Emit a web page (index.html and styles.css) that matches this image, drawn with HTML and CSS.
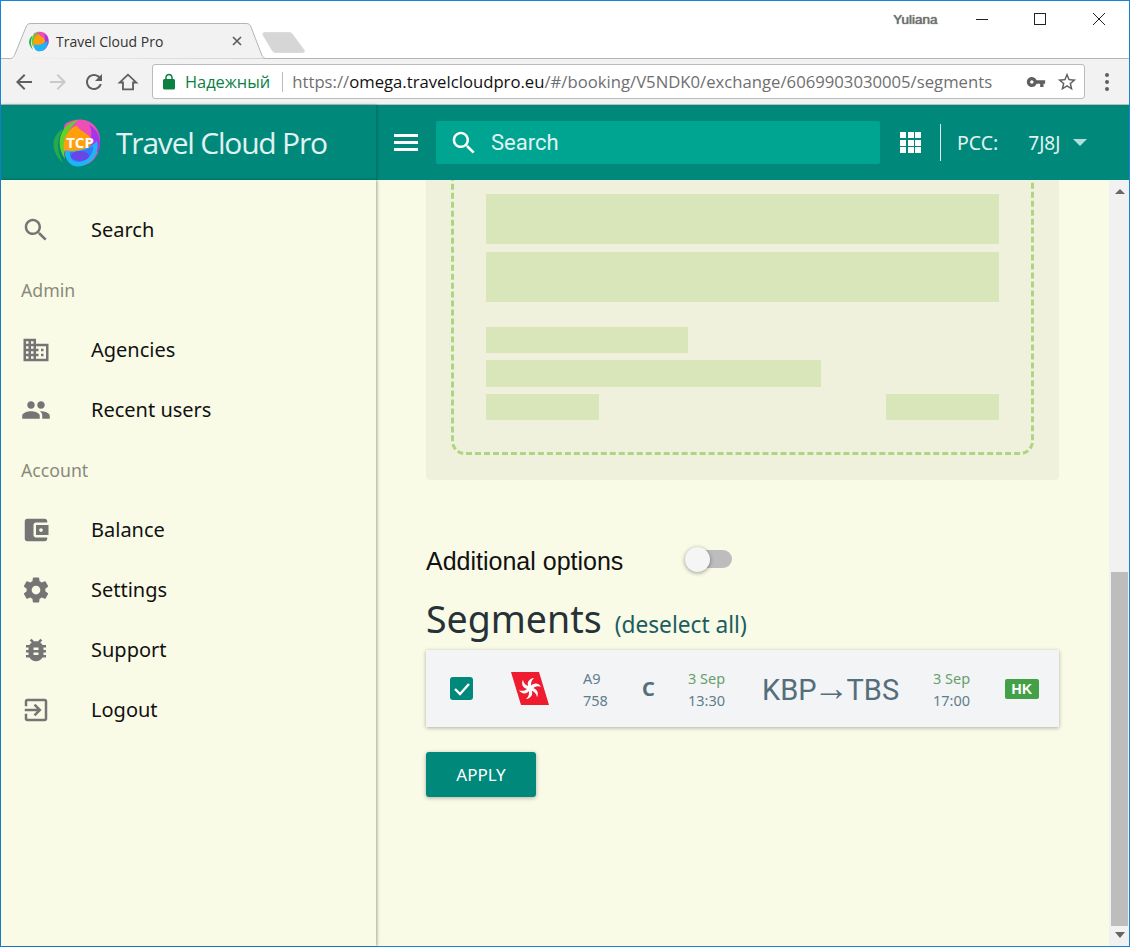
FILE: index.html
```html
<!DOCTYPE html>
<html lang="en">
<head>
    <meta charset="UTF-8">
    <meta name="viewport" content="width=device-width, initial-scale=1.0">
    <title>Travel Cloud Pro</title>
    <link rel="stylesheet" href="styles.css">
</head>
<body>
<div class="window">
    <div class="tabstrip">
        <div class="tab">
            <svg class="tab-shape" width="258" height="36" viewBox="0 0 258 36">
                <path d="M0.5 36C5 36 6 33 7 31L18 4C19 1.500 20 0.500 23 0.500H238C241 0.500 242 1.500 243 4L253 30C254 33 255 35 257.500 35.500" fill="#f2f2f2" stroke="#b4b4b4"/>
            </svg>
            <svg class="favicon" width="21" height="21" viewBox="0 0 50 48">
                <path d="M12 10C2 15 -3 30 12 44C6 32 5 22 12 10Z" fill="#2aa84a"/>
                <path d="M14 5C24 -2 40 -1 46 10C52 20 49 36 40 43C30 50 18 47 14 36C12 26 11 14 14 5Z" fill="#ee4fb6"/>
                <path d="M27 1C12 4 2 22 14 40C11 26 14 12 27 1Z" fill="#5fd32a"/>
                <path d="M38 6C47 10 52 22 47 33L36 28C41 20 42 12 38 6Z" fill="#a634e8"/>
                <path d="M13 32C11 20 18 8 26 7C30 14 40 14 41 24C37 31 22 36 13 32Z" fill="#ff9f0a"/>
                <path d="M14 31C24 34 38 30 46 22C49 34 41 46 28 47.500C20 48 14 42 14 31Z" fill="#1fb4f5"/>
            </svg>
            <span class="tab-title">Travel Cloud Pro</span>
            <svg class="tab-close" width="10" height="10" viewBox="0 0 10 10">
                <path d="M1 1L9 9M9 1L1 9" stroke="#5a5a5a" stroke-width="1.600" fill="none"/>
            </svg>
        </div>
        <svg class="new-tab" width="44" height="21" viewBox="0 0 44 21">
            <path d="M3 0.500H27C29 0.500 30 1.500 31 3L42 18C43 20 42 20.500 40 20.500H14C12 20.500 11 20 10 18L1 3C0.500 1.500 1 0.500 3 0.500Z" fill="#d6d6d6" stroke="#dcdcdc"/>
        </svg>
        <span class="profile">Yuliana</span>
        <div class="caption-btn">
            <svg width="14" height="14" viewBox="0 0 14 14"><path d="M1 7.500H13" stroke="#222" fill="none"/></svg>
        </div>
        <div class="caption-btn">
            <svg width="14" height="14" viewBox="0 0 14 14"><rect x="1.500" y="1.500" width="11" height="11" stroke="#222" fill="none"/></svg>
        </div>
        <div class="caption-btn">
            <svg width="14" height="14" viewBox="0 0 14 14"><path d="M1 1L13 13M13 1L1 13" stroke="#222" fill="none"/></svg>
        </div>
    </div>

    <div class="toolbar">
        <div class="tool">
            <svg width="24" height="24" viewBox="0 0 24 24" fill="#5f5f5f"><path d="M20 11H7.830l5.590-5.590L12 4l-8 8 8 8 1.410-1.410L7.830 13H20v-2z"/></svg>
        </div>
        <div class="tool">
            <svg width="24" height="24" viewBox="0 0 24 24" fill="#c9c9c9"><path d="M12 4l-1.410 1.410L16.170 11H4v2h12.170l-5.580 5.590L12 20l8-8z"/></svg>
        </div>
        <div class="tool tool-reload">
            <svg width="24" height="24" viewBox="0 0 24 24" fill="#5f5f5f"><path d="M17.650 6.350C16.200 4.900 14.210 4 12 4c-4.420 0-7.990 3.580-7.990 8s3.570 8 7.990 8c3.730 0 6.840-2.550 7.730-6h-2.080c-.82 2.330-3.040 4-5.650 4-3.310 0-6-2.690-6-6s2.690-6 6-6c1.660 0 3.140.69 4.220 1.780L13 11h7V4l-2.350 2.350z"/></svg>
        </div>
        <div class="tool">
            <svg width="22" height="22" viewBox="0 0 24 24" fill="none" stroke="#5f5f5f" stroke-width="2"><path d="M12 4L3 12.500H6.500V20H17.500V12.500H21Z"/></svg>
        </div>
        <div class="omnibox">
            <svg class="lock" width="18" height="18" viewBox="0 0 24 24" fill="#0b8043"><path d="M18 8h-1V6c0-2.760-2.240-5-5-5S7 3.240 7 6v2H6c-1.100 0-2 .9-2 2v10c0 1.100.9 2 2 2h12c1.100 0 2-.9 2-2V10c0-1.100-.9-2-2-2zM9 6c0-1.660 1.340-3 3-3s3 1.340 3 3v2H9V6z"/></svg>
            <span class="secure">Надежный</span>
            <span class="omni-sep"></span>
            <span class="url"><span class="url-dim">https://</span><span class="url-host">omega.travelcloudpro.eu</span><span class="url-dim">/#/booking/V5NDK0/exchange/6069903030005/segments</span></span>
            <svg class="omni-key" width="20" height="20" viewBox="0 0 24 24" fill="#5f5f5f"><path d="M12.650 10C11.830 7.670 9.610 6 7 6c-3.310 0-6 2.690-6 6s2.690 6 6 6c2.610 0 4.830-1.670 5.650-4H17v4h4v-4h2v-4H12.650zM7 14c-1.100 0-2-.9-2-2s.9-2 2-2 2 .9 2 2-.9 2-2 2z"/></svg>
            <svg class="omni-star" width="22" height="22" viewBox="0 0 24 24" fill="#5f5f5f"><path d="M22 9.240l-7.190-.62L12 2 9.190 8.630 2 9.240l5.460 4.730L5.820 21 12 17.270 18.180 21l-1.630-7.030L22 9.240zM12 15.400l-3.760 2.270 1-4.280-3.320-2.880 4.380-.38L12 6.100l1.710 4.040 4.380.38-3.320 2.880 1 4.280L12 15.400z"/></svg>
        </div>
        <div class="chrome-menu">
            <span></span><span></span><span></span>
        </div>
    </div>

    <header class="app-header">
        <div class="brand">
            <svg class="brand-logo" width="50" height="48" viewBox="0 0 50 48">
                <path d="M12 10C2 15 -3 30 12 44C6 32 5 22 12 10Z" fill="#2aa84a"/>
                <path d="M14 5C24 -2 40 -1 46 10C52 20 49 36 40 43C30 50 18 47 14 36C12 26 11 14 14 5Z" fill="#ee4fb6"/>
                <path d="M27 1C12 4 2 22 14 40C11 26 14 12 27 1Z" fill="#5fd32a"/>
                <path d="M38 6C47 10 52 22 47 33L36 28C41 20 42 12 38 6Z" fill="#a634e8"/>
                <path d="M13 32C11 20 18 8 26 7C30 14 40 14 41 24C37 31 22 36 13 32Z" fill="#ff9f0a"/>
                <path d="M14 31C24 34 38 30 46 22C49 34 41 46 28 47.500C20 48 14 42 14 31Z" fill="#1fb4f5"/>
                <path d="M19 33C26 33 36 31 42 27C43 34 37 42 28 43C22 43 18 39 19 33Z" fill="#2f7cf6"/>
                <ellipse cx="29" cy="37" rx="9" ry="5" fill="#6a45e6"/>
                <text class="brand-logo-text" x="29" y="29" text-anchor="middle">TCP</text>
            </svg>
            <span class="brand-name">Travel Cloud Pro</span>
        </div>
        <div class="header-main">
            <div class="hamburger"><span></span><span></span><span></span></div>
            <div class="search-box">
                <svg width="30" height="30" viewBox="0 0 24 24" fill="#fff"><path d="M15.500 14h-.79l-.28-.27C15.410 12.590 16 11.110 16 9.500 16 5.910 13.090 3 9.500 3S3 5.910 3 9.500 5.910 16 9.500 16c1.610 0 3.090-.59 4.230-1.570l.27.28v.79l5 4.990L20.490 19l-4.990-5zm-6 0C7.010 14 5 11.990 5 9.500S7.010 5 9.500 5 14 7.010 14 9.500 11.990 14 9.500 14z"/></svg>
                <span class="search-label">Search</span>
            </div>
            <div class="apps-grid">
                <span></span><span></span><span></span>
                <span></span><span></span><span></span>
                <span></span><span></span><span></span>
            </div>
            <span class="header-sep"></span>
            <span class="pcc-label">PCC:</span>
            <span class="pcc-value">7J8J</span>
            <span class="caret"></span>
        </div>
    </header>

    <div class="app-body">
        <nav class="sidebar">
            <a class="nav-item">
                <svg class="nav-icon" viewBox="0 0 24 24"><path d="M15.500 14h-.79l-.28-.27C15.410 12.590 16 11.110 16 9.500 16 5.910 13.090 3 9.500 3S3 5.910 3 9.500 5.910 16 9.500 16c1.610 0 3.090-.59 4.230-1.570l.27.28v.79l5 4.990L20.490 19l-4.990-5zm-6 0C7.010 14 5 11.990 5 9.500S7.010 5 9.500 5 14 7.010 14 9.500 11.990 14 9.500 14z"/></svg>
                <span class="nav-label">Search</span>
            </a>
            <div class="nav-group">Admin</div>
            <a class="nav-item">
                <svg class="nav-icon" viewBox="0 0 24 24"><path d="M12 7V3H2v18h20V7H12zM6 19H4v-2h2v2zm0-4H4v-2h2v2zm0-4H4V9h2v2zm0-4H4V5h2v2zm4 12H8v-2h2v2zm0-4H8v-2h2v2zm0-4H8V9h2v2zm0-4H8V5h2v2zm10 12h-8v-2h2v-2h-2v-2h2v-2h-2V9h8v10zm-2-8h-2v2h2v-2zm0 4h-2v2h2v-2z"/></svg>
                <span class="nav-label">Agencies</span>
            </a>
            <a class="nav-item">
                <svg class="nav-icon" viewBox="0 0 24 24"><path d="M16 11c1.660 0 2.990-1.340 2.990-3S17.660 5 16 5c-1.660 0-3 1.340-3 3s1.340 3 3 3zm-8 0c1.660 0 2.990-1.340 2.990-3S9.660 5 8 5C6.340 5 5 6.340 5 8s1.340 3 3 3zm0 2c-2.330 0-7 1.170-7 3.500V19h14v-2.500c0-2.330-4.670-3.500-7-3.500zm8 0c-.29 0-.62.02-.97.05 1.160.84 1.970 1.970 1.970 3.450V19h6v-2.500c0-2.330-4.670-3.500-7-3.500z"/></svg>
                <span class="nav-label">Recent users</span>
            </a>
            <div class="nav-group">Account</div>
            <a class="nav-item">
                <svg class="nav-icon" viewBox="0 0 24 24"><path d="M21 18v1c0 1.100-.9 2-2 2H5c-1.110 0-2-.9-2-2V5c0-1.100.89-2 2-2h14c1.100 0 2 .9 2 2v1h-9c-1.110 0-2 .9-2 2v8c0 1.100.89 2 2 2h9zm-9-2h10V8H12v8zm4-2.500c-.83 0-1.500-.67-1.500-1.500s.67-1.500 1.500-1.500 1.500.67 1.500 1.500-.67 1.500-1.500 1.500z"/></svg>
                <span class="nav-label">Balance</span>
            </a>
            <a class="nav-item">
                <svg class="nav-icon" viewBox="0 0 24 24"><path d="M19.430 12.980c.04-.32.07-.64.07-.98s-.03-.66-.07-.98l2.110-1.650c.19-.15.24-.42.12-.64l-2-3.460c-.12-.22-.39-.3-.61-.22l-2.490 1c-.52-.4-1.080-.73-1.690-.98l-.38-2.650C14.460 2.180 14.250 2 14 2h-4c-.25 0-.46.18-.49.42l-.38 2.650c-.61.25-1.170.59-1.690.98l-2.490-1c-.23-.09-.49 0-.61.22l-2 3.460c-.13.22-.07.49.12.64l2.110 1.650c-.04.32-.07.65-.07.98s.03.66.07.98l-2.110 1.650c-.19.15-.24.42-.12.64l2 3.460c.12.22.39.3.61.22l2.490-1c.52.4 1.080.73 1.690.98l.38 2.650c.03.24.24.42.49.42h4c.25 0 .46-.18.49-.42l.38-2.650c.61-.25 1.170-.59 1.690-.98l2.490 1c.23.09.49 0 .61-.22l2-3.460c.12-.22.07-.49-.12-.64l-2.110-1.650zM12 15.500c-1.930 0-3.500-1.570-3.500-3.500s1.570-3.500 3.500-3.500 3.500 1.570 3.500 3.500-1.570 3.500-3.500 3.500z"/></svg>
                <span class="nav-label">Settings</span>
            </a>
            <a class="nav-item">
                <svg class="nav-icon" viewBox="0 0 24 24"><path d="M20 8h-2.810c-.45-.78-1.070-1.450-1.820-1.960L17 4.410 15.590 3l-2.170 2.170C12.960 5.060 12.490 5 12 5c-.49 0-.96.06-1.410.17L8.410 3 7 4.410l1.620 1.630C7.880 6.550 7.260 7.220 6.810 8H4v2h2.090c-.05.33-.09.66-.09 1v1H4v2h2v1c0 .34.04.67.09 1H4v2h2.810c1.040 1.790 2.970 3 5.190 3s4.150-1.210 5.190-3H20v-2h-2.090c.05-.33.09-.66.09-1v-1h2v-2h-2v-1c0-.34-.04-.67-.09-1H20V8zm-6 8h-4v-2h4v2zm0-4h-4v-2h4v2z"/></svg>
                <span class="nav-label">Support</span>
            </a>
            <a class="nav-item">
                <svg class="nav-icon" viewBox="0 0 24 24"><path d="M10.090 15.590L11.500 17l5-5-5-5-1.410 1.410L12.670 11H3v2h9.670l-2.580 2.590zM19 3H5c-1.110 0-2 .9-2 2v4h2V5h14v14H5v-4H3v4c0 1.100.89 2 2 2h14c1.100 0 2-.9 2-2V5c0-1.100-.9-2-2-2z"/></svg>
                <span class="nav-label">Logout</span>
            </a>
        </nav>

        <main class="content">
            <div class="ticket-panel">
                <div class="ticket-dashed">
                    <div class="ph ph-tall"></div>
                    <div class="ph ph-tall"></div>
                    <div class="ph-lines">
                        <div class="ph ph-line ph-w202"></div>
                        <div class="ph ph-line ph-w335"></div>
                        <div class="ph-row">
                            <div class="ph ph-line ph-w113"></div>
                            <div class="ph ph-line ph-w113"></div>
                        </div>
                    </div>
                </div>
            </div>

            <div class="options-row">
                <span class="options-label">Additional options</span>
                <span class="toggle"><span class="toggle-knob"></span></span>
            </div>

            <div class="segments-head">
                <h1>Segments</h1>
                <a class="deselect">(deselect all)</a>
            </div>

            <div class="segment-card">
                <span class="checkbox">
                    <svg width="23" height="23" viewBox="0 0 23 23"><path d="M5 12L10 17L19 7" stroke="#fff" stroke-width="2.400" fill="none"/></svg>
                </span>
                <svg class="airline" width="38" height="33" viewBox="0 0 38 33">
                    <path d="M0 0H28L38 33H10Z" fill="#ee1c2e"/>
                    <g fill="#fff" transform="translate(19 16.500)">
                        <circle r="2.500"/>
                        <path id="blade" d="M-1.500 -1.500C-3.500 -6 -1 -10 4 -10.500C1 -8 0.500 -5 1.500 -1.500Z"/>
                        <use href="#blade" transform="rotate(60)"/>
                        <use href="#blade" transform="rotate(120)"/>
                        <use href="#blade" transform="rotate(180)"/>
                        <use href="#blade" transform="rotate(240)"/>
                        <use href="#blade" transform="rotate(300)"/>
                    </g>
                </svg>
                <div class="seg-small">A9<br>758</div>
                <div class="seg-class">C</div>
                <div class="seg-small"><span class="seg-date">3 Sep</span><br>13:30</div>
                <div class="seg-route">KBP<span class="seg-arrow">→</span>TBS</div>
                <div class="seg-small"><span class="seg-date">3 Sep</span><br>17:00</div>
                <span class="seg-status">HK</span>
            </div>

            <button class="apply-btn" type="button">APPLY</button>
        </main>

        <div class="scrollbar">
            <span class="scroll-up"></span>
            <div class="scroll-track"><div class="scroll-thumb"></div></div>
            <span class="scroll-down"></span>
        </div>
    </div>
</div>
</body>
</html>
```

FILE: styles.css
```css
* {
    box-sizing: border-box;
}
html, body {
    margin: 0;
    height: 100%;
    overflow: hidden;
}
body {
    font-family: "Noto Sans", sans-serif;
    background-color: #fff;
}
.window {
    display: flex;
    flex-direction: column;
    width: 1130px;
    height: 947px;
    border: 1px solid #1883d7;
}

/* browser tabs */
.tabstrip {
    display: flex;
    align-items: flex-start;
    flex: 0 0 58px;
    padding-right: 1px;
    background-color: #fff;
    border-bottom: 1px solid #b4b4b4;
}
.tab {
    position: relative;
    display: flex;
    align-items: center;
    width: 258px;
    height: 36px;
    margin: 22px 0 -1px 7px;
    padding: 0 24px 0 20px;
    z-index: 1;
}
.tab-shape {
    position: absolute;
    left: 0;
    top: 0;
}
.favicon, .tab-title, .tab-close {
    position: relative;
}
.tab-title {
    margin-left: 7px;
    font-family: "Open Sans", sans-serif;
    font-size: 14px;
    color: #333;
}
.tab-close {
    margin-left: auto;
}
.new-tab {
    margin: 31px 0 0 -4px;
}
.profile {
    margin: 11px 15px 0 auto;
    font-family: "Liberation Sans", sans-serif;
    font-size: 13.500px;
    color: #777;
    text-shadow: 0 0 1px #222;
}
.caption-btn {
    display: flex;
    align-items: center;
    justify-content: center;
    width: 58.500px;
    height: 36px;
}

/* browser toolbar */
.toolbar {
    display: flex;
    align-items: center;
    flex: 0 0 46px;
    padding-left: 6px;
    background-color: #f2f2f2;
    border-bottom: 1px solid #bdbdbd;
}
.tool {
    display: flex;
    align-items: center;
    justify-content: center;
    width: 34px;
}
.tool-reload {
    margin-left: 2px;
}
.omnibox {
    display: flex;
    align-items: center;
    width: 933px;
    height: 35px;
    margin-left: 7px;
    padding: 0 6px 0 7px;
    background-color: #fff;
    border: 1px solid #bbb;
    border-radius: 3px;
}
.secure {
    margin-left: 7px;
    font-family: "Open Sans", sans-serif;
    font-size: 16.400px;
    color: #0b8043;
}
.omni-sep {
    width: 1px;
    height: 20px;
    margin: 0 9px 0 12px;
    background-color: #bbb;
}
.url {
    font-family: "Open Sans", sans-serif;
    font-size: 16.700px;
    white-space: nowrap;
}
.url-dim {
    color: #6f6f6f;
}
.url-host {
    color: #111;
}
.omni-key {
    margin-left: auto;
}
.omni-star {
    margin-left: 10px;
}
.chrome-menu {
    display: flex;
    flex: 1;
    flex-direction: column;
    align-items: center;
    gap: 3px;
}
.chrome-menu span {
    width: 4px;
    height: 4px;
    border-radius: 50%;
    background-color: #5f5f5f;
}

/* app header */
.app-header {
    display: flex;
    flex: 0 0 75px;
    background-color: #00897b;
}
.brand {
    display: flex;
    align-items: center;
    width: 375px;
    padding-left: 50px;
    box-shadow: 1px 0 3px rgba(0, 0, 0, 0.25);
}
.brand-logo-text {
    font-family: "Open Sans", sans-serif;
    font-size: 15px;
    font-weight: 700;
    fill: #fff;
}
.brand-name {
    margin-left: 15px;
    font-family: "Open Sans", sans-serif;
    font-size: 30px;
    letter-spacing: -1.200px;
    color: #e0f2f1;
}
.header-main {
    display: flex;
    flex: 1;
    align-items: center;
    padding-left: 18px;
}
.hamburger {
    display: flex;
    flex-direction: column;
    gap: 4px;
    width: 24px;
}
.hamburger span {
    height: 3px;
    background-color: #fff;
}
.search-box {
    display: flex;
    align-items: center;
    width: 444px;
    height: 43px;
    margin-left: 18px;
    padding-left: 13px;
    background-color: #00a591;
    border-radius: 2px;
}
.search-label {
    margin-left: 12px;
    font-family: Roboto, sans-serif;
    font-size: 22px;
    color: #e0f2f1;
}
.apps-grid {
    display: grid;
    grid-template-columns: repeat(3, 6px);
    grid-auto-rows: 6px;
    gap: 1.500px;
    margin-left: 20px;
}
.apps-grid span {
    background-color: #fff;
}
.header-sep {
    width: 1px;
    height: 37px;
    margin-left: 19px;
    background-color: #e0f2f1;
}
.pcc-label {
    margin-left: 16px;
    font-size: 19.500px;
    color: #e0f2f1;
}
.pcc-value {
    margin-left: 30px;
    font-size: 19px;
    color: #e0f2f1;
}
.caret {
    width: 0;
    height: 0;
    margin-left: 13px;
    border-left: 7px solid transparent;
    border-right: 7px solid transparent;
    border-top: 7px solid #b2dfdb;
}

/* sidebar */
.app-body {
    display: flex;
    flex: 1;
    min-height: 0;
    background-color: #f9fbe7;
}
.sidebar {
    flex: 0 0 375px;
    padding-top: 20px;
    box-shadow: 1px 0 3px rgba(0, 0, 0, 0.35);
    z-index: 1;
}
.nav-item, .nav-group {
    display: flex;
    align-items: center;
    height: 60px;
    padding-left: 20px;
}
.nav-item {
    font-size: 20px;
    color: #111;
}
.nav-label {
    margin-top: -2px;
}
.nav-icon {
    width: 30px;
    height: 30px;
    margin-right: 40px;
    fill: #757575;
}
.nav-group {
    font-size: 17.700px;
    color: #8a8a7c;
}

/* page content */
.content {
    flex: 1;
    min-width: 0;
    padding-left: 50px;
    overflow: hidden;
}
.ticket-panel {
    width: 633px;
    height: 340px;
    margin-top: -40px;
    padding: 20px 25px 0;
    background-color: #f0f1dc;
    border-radius: 4px;
}
.ticket-dashed {
    display: flex;
    flex-direction: column;
    gap: 8px;
    width: 583px;
    height: 295px;
    padding: 31px 32px 0;
    border: 3px dashed #aed581;
    border-radius: 14px;
}
.ph {
    background-color: #d9e6b9;
}
.ph-tall {
    height: 50px;
}
.ph-lines {
    display: flex;
    flex-direction: column;
    gap: 7px;
    margin-top: 17px;
}
.ph-line {
    height: 26px;
}
.ph-w202 {
    width: 202px;
}
.ph-w335 {
    width: 335px;
    height: 27px;
}
.ph-w113 {
    width: 113px;
}
.ph-row {
    display: flex;
    justify-content: space-between;
}
.options-row {
    display: flex;
    align-items: center;
    height: 32px;
    margin-top: 65px;
}
.options-label {
    font-family: "Liberation Sans", sans-serif;
    font-size: 25px;
    color: #111;
}
.toggle {
    position: relative;
    width: 42px;
    height: 18px;
    margin-left: 67px;
    background-color: #bdbdbd;
    border-radius: 9px;
    margin-top: -4px;
}
.toggle-knob {
    position: absolute;
    left: -5px;
    top: -3px;
    width: 25px;
    height: 25px;
    background-color: #f5f5f5;
    border-radius: 50%;
    box-shadow: 0 1px 4px rgba(0, 0, 0, 0.4);
}
.segments-head {
    display: flex;
    align-items: baseline;
    gap: 13px;
    height: 50px;
    margin-top: 17px;
}
.segments-head h1 {
    margin: 0;
    font-size: 37.500px;
    font-weight: 400;
    line-height: 50px;
    color: #263238;
}
.deselect {
    font-size: 22.700px;
    color: #1b5e60;
}
.segment-card {
    display: grid;
    grid-template-columns: 61px 72px 59px 46px 74px 171px 72px 34px;
    align-items: center;
    width: 633px;
    height: 77px;
    margin-top: 6px;
    padding-left: 24px;
    background-color: #f3f4f6;
    box-shadow: 0 1px 4px rgba(0, 0, 0, 0.3);
}
.checkbox {
    display: block;
    width: 23px;
    height: 23px;
    background-color: #00897b;
    border-radius: 3px;
}
.checkbox svg {
    display: block;
}
.seg-small {
    font-size: 14.500px;
    line-height: 22px;
    color: #607d8b;
}
.seg-date {
    color: #689f6a;
}
.seg-class {
    font-size: 20px;
    font-weight: 700;
    color: #546e7a;
}
.seg-route {
    padding-top: 3px;
    font-family: Roboto, sans-serif;
    font-size: 29px;
    white-space: nowrap;
    color: #546e7a;
}
.seg-arrow {
    margin: 0 -3px;
    font-family: "Liberation Sans", sans-serif;
    font-size: 36px;
    line-height: 0;
}
.seg-status {
    height: 20px;
    font-family: "Liberation Sans", sans-serif;
    font-size: 14px;
    font-weight: 700;
    line-height: 20px;
    text-align: center;
    letter-spacing: 0.5px;
    color: #fff;
    background-color: #43a047;
    border-radius: 2px;
}
.apply-btn {
    display: block;
    width: 110px;
    height: 45px;
    margin-top: 25px;
    font-family: "Noto Sans", sans-serif;
    font-size: 17px;
    color: #fff;
    background-color: #00897b;
    border: none;
    border-radius: 3px;
    box-shadow: 0 1px 4px rgba(0, 0, 0, 0.3);
}

/* page scrollbar */
.scrollbar {
    display: flex;
    flex: 0 0 20px;
    flex-direction: column;
    align-items: center;
    padding: 0 1px 0 2px;
    background-color: #f1f1f1;
}
.scroll-up, .scroll-down {
    flex: 0 0 auto;
    width: 0;
    height: 0;
    border-left: 5px solid transparent;
    border-right: 5px solid transparent;
}
.scroll-up {
    margin: 9px 0 8px;
    border-bottom: 5px solid #666;
}
.scroll-down {
    margin: 6px 0 8px;
    border-top: 6px solid #666;
}
.scroll-track {
    flex: 1;
    width: 100%;
    padding-top: 370px;
}
.scroll-thumb {
    height: 354px;
    background-color: #bdbdbd;
}
```
